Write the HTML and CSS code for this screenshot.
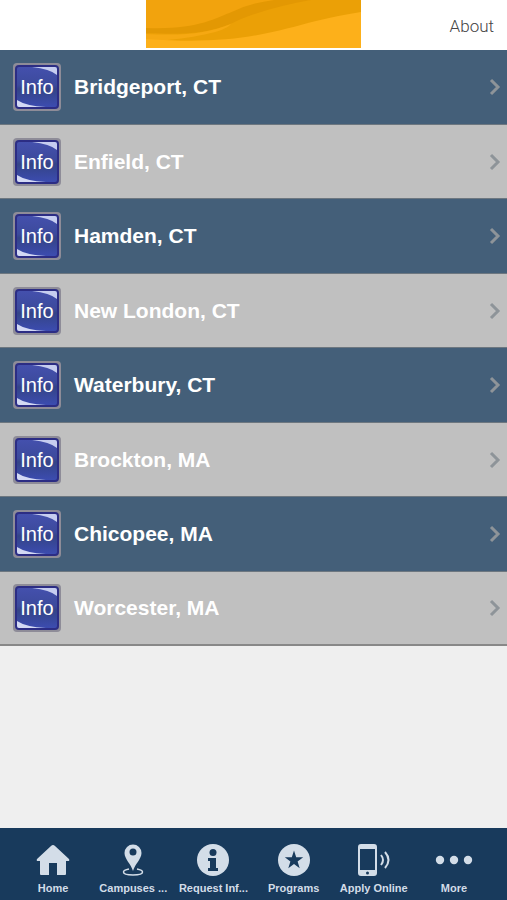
FILE: index.html
```html
<!DOCTYPE html>
<html lang="en">
<head>
    <meta charset="UTF-8">
    <meta name="viewport" content="width=device-width, initial-scale=1.0">
    <title>Campuses</title>
    <link rel="stylesheet" href="styles.css">
</head>
<body>
    <!-- Shared icons -->
    <svg class="sprite" aria-hidden="true">
        <defs>
            <linearGradient id="badgeFill" x1="0" y1="0" x2="0" y2="1">
                <stop offset="0" stop-color="#4450ad"/>
                <stop offset="0.45" stop-color="#3c4a9c"/>
                <stop offset="0.55" stop-color="#344487"/>
                <stop offset="1" stop-color="#3c4cb0"/>
            </linearGradient>
        </defs>
        <symbol id="info" viewBox="0 0 50 50">
            <rect x="1" y="1" width="48" height="48" rx="4" fill="#8e8c98"/>
            <rect x="3" y="3" width="44" height="44" rx="4" fill="#2c2d84"/>
            <rect x="5" y="5" width="40" height="40" rx="2" fill="url(#badgeFill)"/>
            <path d="M20 5H43Q45 5 45 7V13Q38 7 20 5Z" fill="#c6cdf0"/>
            <path d="M5 38Q14 44 34 45H7Q5 45 5 43Z" fill="#d3d9f4"/>
        </symbol>
        <symbol id="chevron" viewBox="0 0 12 18">
            <path d="M2 2L9 9L2 16" fill="none" stroke="currentColor" stroke-width="3"/>
        </symbol>
    </svg>

    <header class="header">
        <svg class="banner" viewBox="0 0 215 48" preserveAspectRatio="none" aria-hidden="true">
            <rect width="215" height="48" fill="#f2a30d"/>
            <path d="M0 33Q50 37 95 17Q125 3 165 0H215V12C165 27 130 38 70 40Q30 42 0 38Z" fill="#eba006"/>
            <path d="M0 28C50 30 68 19 88 11Q105 3 128 0H165Q125 7 95 19C65 34 40 35 0 33Z" fill="#e39803"/>
            <path d="M0 34C40 36 62 33 85 24Q75 36 0 42Z" fill="#f6a812"/>
            <path d="M0 39C90 46 130 31 170 21Q195 15 215 12V48H0Z" fill="#fdb01a"/>
        </svg>
        <a class="about" href="#about">About</a>
    </header>

    <main class="content">
        <ul class="campus-list">
            <li><a class="campus" href="#bridgeport"><span class="badge"><svg><use href="#info"/></svg><span>Info</span></span><span class="name">Bridgeport, CT</span><svg class="chevron"><use href="#chevron"/></svg></a></li>
            <li><a class="campus" href="#enfield"><span class="badge"><svg><use href="#info"/></svg><span>Info</span></span><span class="name">Enfield, CT</span><svg class="chevron"><use href="#chevron"/></svg></a></li>
            <li><a class="campus" href="#hamden"><span class="badge"><svg><use href="#info"/></svg><span>Info</span></span><span class="name">Hamden, CT</span><svg class="chevron"><use href="#chevron"/></svg></a></li>
            <li><a class="campus" href="#new-london"><span class="badge"><svg><use href="#info"/></svg><span>Info</span></span><span class="name">New London, CT</span><svg class="chevron"><use href="#chevron"/></svg></a></li>
            <li><a class="campus" href="#waterbury"><span class="badge"><svg><use href="#info"/></svg><span>Info</span></span><span class="name">Waterbury, CT</span><svg class="chevron"><use href="#chevron"/></svg></a></li>
            <li><a class="campus" href="#brockton"><span class="badge"><svg><use href="#info"/></svg><span>Info</span></span><span class="name">Brockton, MA</span><svg class="chevron"><use href="#chevron"/></svg></a></li>
            <li><a class="campus" href="#chicopee"><span class="badge"><svg><use href="#info"/></svg><span>Info</span></span><span class="name">Chicopee, MA</span><svg class="chevron"><use href="#chevron"/></svg></a></li>
            <li><a class="campus" href="#worcester"><span class="badge"><svg><use href="#info"/></svg><span>Info</span></span><span class="name">Worcester, MA</span><svg class="chevron"><use href="#chevron"/></svg></a></li>
        </ul>
    </main>

    <nav class="tabs">
        <a class="tab" href="#home">
            <svg class="tab-icon" viewBox="0 0 40 34" aria-hidden="true">
                <path d="M20 2Q21 2 22 3L36 16Q37 18 35 18H33V31Q33 32 32 32H24V20H16V32H8Q7 32 7 31V18H5Q3 18 4 16L18 3Q19 2 20 2Z" fill="currentColor"/>
            </svg>
            <span>Home</span>
        </a>
        <a class="tab" href="#campuses">
            <svg class="tab-icon" viewBox="0 0 40 34" aria-hidden="true">
                <path d="M16 26Q10.500 27 10.500 29C10.500 33 29.500 33 29.500 29Q29.500 27 24 26" fill="none" stroke="currentColor" stroke-width="1.500"/>
                <path fill-rule="evenodd" d="M20 1.500A8.500 8.500 0 0 0 11.500 10C11.500 16 18 21 20 28C22 21 28.500 16 28.500 10A8.500 8.500 0 0 0 20 1.500ZM20 5.500A3.500 3.500 0 1 1 20 12.500A3.500 3.500 0 1 1 20 5.500Z" fill="currentColor"/>
            </svg>
            <span>Campuses ...</span>
        </a>
        <a class="tab" href="#request">
            <svg class="tab-icon" viewBox="0 0 40 34" aria-hidden="true">
                <circle cx="20" cy="17" r="16" fill="currentColor"/>
                <circle cx="20" cy="9.500" r="3.500" fill="#183a5c"/>
                <path d="M15 15H23V25H25V28H15V25H17V18H15Z" fill="#183a5c"/>
            </svg>
            <span>Request Inf...</span>
        </a>
        <a class="tab" href="#programs">
            <svg class="tab-icon" viewBox="0 0 40 34" aria-hidden="true">
                <circle cx="20" cy="17" r="16" fill="currentColor"/>
                <path d="M20 7.500L22.200 14.300H29.200L23.600 18.500L25.700 25.200L20 21.100L14.300 25.200L16.400 18.500L10.800 14.300H17.800Z" fill="#183a5c"/>
            </svg>
            <span>Programs</span>
        </a>
        <a class="tab" href="#apply">
            <svg class="tab-icon" viewBox="0 0 40 34" aria-hidden="true">
                <path fill-rule="evenodd" d="M7 1H20Q23 1 23 4V30Q23 33 20 33H7Q4 33 4 30V4Q4 1 7 1ZM6 6V27H21V6ZM13.500 28.500A1.500 1.500 0 1 0 13.500 31.500A1.500 1.500 0 1 0 13.500 28.500Z" fill="currentColor"/>
                <path d="M27 12Q31 17 27 22M31 9Q38 17 31 25" fill="none" stroke="currentColor" stroke-width="2"/>
            </svg>
            <span>Apply Online</span>
        </a>
        <a class="tab" href="#more">
            <svg class="tab-icon" viewBox="0 0 40 34" aria-hidden="true">
                <circle cx="6" cy="17" r="4.200" fill="currentColor"/>
                <circle cx="20" cy="17" r="4.200" fill="currentColor"/>
                <circle cx="34" cy="17" r="4.200" fill="currentColor"/>
            </svg>
            <span>More</span>
        </a>
    </nav>
</body>
</html>
```
FILE: styles.css
```css
body {
    margin: 0;
    min-height: 100vh;
    display: flex;
    flex-direction: column;
    background-color: #efefef;
    font-family: "Liberation Sans", Arial, sans-serif;
}

a {
    color: inherit;
    text-decoration: none;
}

.sprite {
    position: absolute;
    width: 0;
    height: 0;
}

/* Header: banner in the middle, link on the right */
.header {
    display: grid;
    grid-template-columns: 1fr 215px 1fr;
    height: 50px;
    background-color: #fff;
}

.banner {
    grid-column: 2;
    width: 215px;
    height: 48px;
}

.about {
    justify-self: end;
    padding-right: 13px;
    font-family: Roboto, sans-serif;
    font-weight: 300;
    font-size: 17px;
    line-height: 52px;
    color: #444;
}

.content {
    flex: 1;
}

.campus-list {
    margin: 0;
    padding: 0;
    list-style: none;
}

.campus {
    display: flex;
    align-items: center;
    gap: 12px;
    box-sizing: border-box;
    height: 75px;
    padding: 0 6px 0 12px;
    background-color: #445f79;
    border-bottom: 1px solid #6d7780;
    color: #fff;
}

.campus-list li:nth-child(even) .campus {
    height: 74px;
    background-color: #c0c0c0;
}

.campus-list li:last-child .campus {
    border-bottom: 2px solid #888;
}

/* The word sits on top of the blue square */
.badge {
    display: grid;
    place-items: center;
    width: 50px;
    height: 50px;
    font-size: 20px;
    line-height: 24px;
}

.badge svg,
.badge span {
    grid-area: 1 / 1;
}

.badge svg {
    width: 50px;
    height: 50px;
}

.name {
    flex: 1;
    font-size: 21px;
    font-weight: bold;
}

.chevron {
    width: 12px;
    height: 18px;
    color: #8e9499;
}

/* Bottom tab bar */
.tabs {
    display: flex;
    box-sizing: border-box;
    height: 72px;
    padding: 15px 13px 0;
    background-color: #183a5c;
    color: #d3dde8;
}

.tab {
    flex: 1 1 0;
    min-width: 0;
    display: flex;
    flex-direction: column;
    align-items: center;
    gap: 4px;
    font-size: 11px;
    font-weight: bold;
    line-height: 14px;
    white-space: nowrap;
}

.tab-icon {
    width: 40px;
    height: 34px;
}
```
